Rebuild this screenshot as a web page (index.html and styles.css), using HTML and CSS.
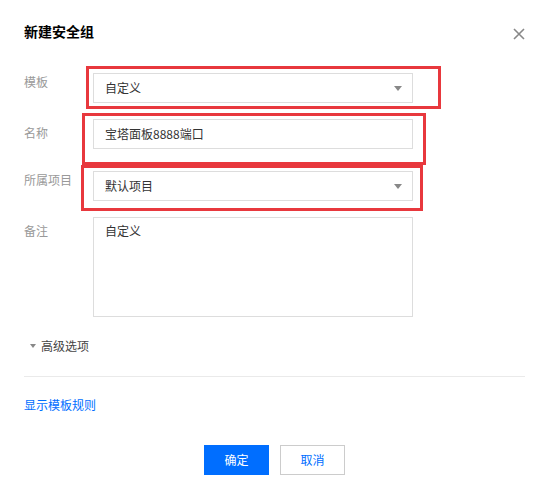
FILE: index.html
```html
<!DOCTYPE html>
<html lang="zh-CN">
<head>
<meta charset="utf-8">
<title>新建安全组</title>
<link rel="stylesheet" href="styles.css">
</head>
<body>
<div class="dialog">
  <div class="header">
    <div class="title">新建安全组</div>
    <svg class="close" width="12" height="12" viewBox="0 0 12 12"><path d="M1 1 L11 11 M11 1 L1 11" stroke="#888" stroke-width="1.6" fill="none"/></svg>
  </div>
  <div class="form">
    <div class="row">
      <div class="label">模板</div>
      <div class="control select"><span>自定义</span><i class="caret"></i></div>
    </div>
    <div class="row row-2">
      <div class="label label-low">名称</div>
      <div class="control input">宝塔面板8888端口</div>
    </div>
    <div class="row row-3">
      <div class="label">所属项目</div>
      <div class="control select"><span>默认项目</span><i class="caret"></i></div>
    </div>
    <div class="row row-4">
      <div class="label label-low">备注</div>
      <div class="control textarea">自定义</div>
    </div>
    <div class="mark mark-1"></div>
    <div class="mark mark-2"></div>
    <div class="mark mark-3"></div>
  </div>
  <div class="advanced"><i class="adv-caret"></i><span>高级选项</span></div>
  <div class="divider"></div>
  <a class="link" href="#">显示模板规则</a>
  <div class="actions">
    <button class="btn btn-primary">确定</button>
    <button class="btn btn-default">取消</button>
  </div>
</div>
</body>
</html>
```
FILE: styles.css
```css
* { box-sizing: border-box; }
html, body { margin: 0; padding: 0; background: #fff; }
body {
  font-family: "Noto Sans CJK SC", "Liberation Sans", sans-serif;
  font-size: 12px;
  color: #333;
  width: 549px;
  height: 500px;
  overflow: hidden;
}
.dialog { padding: 0 24px; }
.header {
  display: flex;
  justify-content: space-between;
  align-items: flex-start;
  padding-top: 21px;
}
.title {
  font-size: 14px;
  line-height: 20px;
  font-weight: bold;
  color: #000;
}
.close { margin-top: 7px; }
.form {
  position: relative;
  margin-top: 32px;
}
.row { display: flex; align-items: flex-start; }
.row-2 { margin-top: 16px; }
.row-3 { margin-top: 22px; }
.row-4 { margin-top: 16px; }
.label {
  width: 69px;
  line-height: 18px;
  color: #999;
  padding-top: 0;
}
.label-low { padding-top: 5px; }
.control {
  width: 320px;
  border: 1px solid #ddd;
  background: #fff;
  color: #333;
  line-height: 18px;
}
.select, .input {
  height: 30px;
  padding: 5px 11px;
  display: flex;
  align-items: center;
  justify-content: space-between;
}
.caret {
  width: 0;
  height: 0;
  border-left: 4px solid transparent;
  border-right: 4px solid transparent;
  border-top: 5px solid #888;
  margin-right: -1px;
}
.textarea {
  height: 100px;
  padding: 4px 11px;
}
.mark {
  position: absolute;
  border: 3px solid #e8383d;
}
.mark-1 { left: 62px; top: -7px; width: 355px; height: 43px; }
.mark-2 { left: 58px; top: 40px; width: 344px; height: 52px; }
.mark-3 { left: 57px; top: 92px; width: 342px; height: 46px; }
.advanced {
  margin-top: 20px;
  display: flex;
  align-items: center;
  line-height: 18px;
  color: #444;
}
.adv-caret {
  width: 0;
  height: 0;
  border-left: 3px solid transparent;
  border-right: 3px solid transparent;
  border-top: 4px solid #888;
  margin-left: 6px;
  margin-right: 5px;
}
.divider {
  margin-top: 21px;
  height: 1px;
  background: #eaeaea;
}
.link {
  display: block;
  margin-top: 19px;
  line-height: 18px;
  color: #006eff;
  text-decoration: none;
  width: max-content;
}
.actions {
  margin-top: 31px;
  display: flex;
  justify-content: center;
  gap: 11px;
}
.btn {
  width: 65px;
  height: 30px;
  font-family: inherit;
  font-size: 12px;
  line-height: 18px;
  padding: 0;
  cursor: pointer;
}
.btn-primary {
  background: #006eff;
  border: 1px solid #006eff;
  color: #fff;
}
.btn-default {
  background: #fff;
  border: 1px solid #ccc;
  color: #006eff;
}
```
